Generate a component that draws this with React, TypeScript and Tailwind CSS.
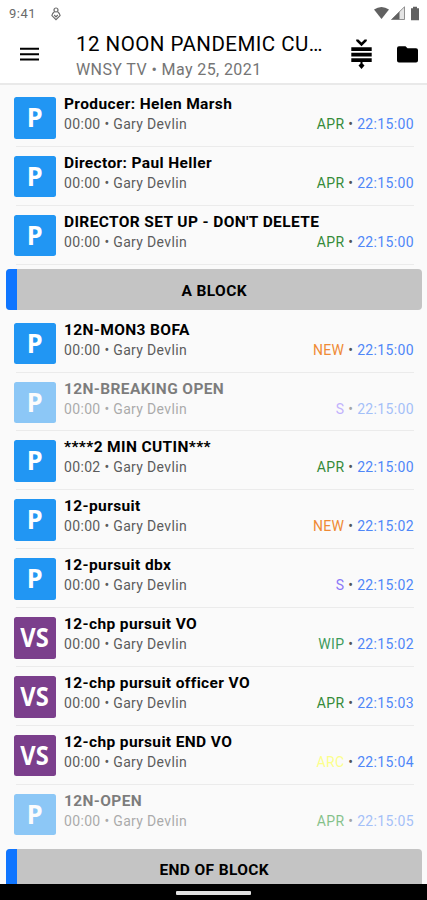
import React from "react";

type Story = {
  kind: "P" | "VS";
  title: string;
  time: string;
  status: string;
  tone: string;
  clock: string;
  dim?: boolean;
};

const GREEN = "text-[#358a39]";
const ORANGE = "text-[#ef8a35]";

const intro: Story[] = [
  { kind: "P", title: "Producer: Helen Marsh", time: "00:00", status: "APR", tone: GREEN, clock: "22:15:00" },
  { kind: "P", title: "Director: Paul Heller", time: "00:00", status: "APR", tone: GREEN, clock: "22:15:00" },
  { kind: "P", title: "DIRECTOR SET UP - DON'T DELETE", time: "00:00", status: "APR", tone: GREEN, clock: "22:15:00" },
];

const blockA: Story[] = [
  { kind: "P", title: "12N-MON3 BOFA", time: "00:00", status: "NEW", tone: ORANGE, clock: "22:15:00" },
  { kind: "P", title: "12N-BREAKING OPEN", time: "00:00", status: "S", tone: "text-[#8b6dff]", clock: "22:15:00", dim: true },
  { kind: "P", title: "****2 MIN CUTIN***", time: "00:02", status: "APR", tone: GREEN, clock: "22:15:00" },
  { kind: "P", title: "12-pursuit", time: "00:00", status: "NEW", tone: ORANGE, clock: "22:15:02" },
  { kind: "P", title: "12-pursuit dbx", time: "00:00", status: "S", tone: "text-[#8b78f8]", clock: "22:15:02" },
  { kind: "VS", title: "12-chp pursuit VO", time: "00:00", status: "WIP", tone: "text-[#3d9a5c]", clock: "22:15:02" },
  { kind: "VS", title: "12-chp pursuit officer VO", time: "00:00", status: "APR", tone: GREEN, clock: "22:15:03" },
  { kind: "VS", title: "12-chp pursuit END VO", time: "00:00", status: "ARC", tone: "text-[#fcff8c]", clock: "22:15:04" },
  { kind: "P", title: "12N-OPEN", time: "00:00", status: "APR", tone: "text-[#0f8a18]", clock: "22:15:05", dim: true },
];

function Row({ s, last = false }: { s: Story; last?: boolean }) {
  return (
    <div className="flex h-[58.9px] shrink-0 pl-3.5 pr-[13px]">
      <div className={`mt-[9px] flex size-[41.5px] shrink-0 items-center justify-center rounded-[2.5px] pb-[2px] font-['Open_Sans',sans-serif] font-bold leading-none text-white ${s.kind === "P" ? "bg-[#2196f3]" : "bg-[#7b3f8c]"} ${s.dim ? "opacity-50" : ""}`}>
        <span className={s.kind === "P" ? "text-[27.5px] scale-x-[0.92]" : "text-[27.5px] scale-x-[0.86]"}>{s.kind}</span>
      </div>
      <div className="relative flex min-w-0 flex-1 flex-col pl-[8.5px] pt-[7px]">
        <div className={s.dim ? "opacity-50" : ""}>
          <div className="whitespace-nowrap text-[15.5px] font-bold leading-[19px] tracking-[0.37px] text-black">{s.title}</div>
          <div className="flex items-center justify-between whitespace-nowrap leading-5">
            <span className="text-[14px] tracking-[0.34px] text-[#5c5c5c]">{s.time} • Gary Devlin</span>
            <span className="text-[14px] tracking-[0.36px] text-[#4f87f8]">
              <span className={s.tone}>{s.status}</span>
              <span className="text-[#555]"> • </span>
              {s.clock}
            </span>
          </div>
        </div>
        {!last && <div className="absolute bottom-0 left-[-40px] right-0 h-px bg-[#ebebeb]" />}
      </div>
    </div>
  );
}

function Block({ label }: { label: string }) {
  return (
    <div className="ml-1.5 mr-[5px] flex h-[41px] shrink-0 overflow-hidden rounded-[4px] bg-[#c4c4c4]">
      <div className="w-[10.5px] bg-[#0f75ff]" />
      <div className="flex flex-1 items-center justify-center pr-[10px] pt-[3px] text-[15.5px] font-bold tracking-[0.37px] text-black">{label}</div>
    </div>
  );
}

export default function App() {
  return (
    <div className="flex h-[900px] w-[427px] flex-col overflow-hidden bg-[#fafafa] font-[Roboto,sans-serif]">
      <header className="flex h-[85px] shrink-0 flex-col border-b-2 border-[#e9e9e9] bg-white">
        <div className="flex h-[27px] items-center pl-[9px] pr-[7px] text-[#6a6a6a]">
          <span className="text-[13px] tracking-[0.5px]">9:41</span>
          <svg className="ml-[15px]" width="10" height="14" viewBox="0 0 10 14" fill="none" stroke="currentColor" strokeWidth="1.2">
            <circle cx="5" cy="3" r="2" />
            <path d="M3.4 4.8Q.9 6.6.9 8.6L5 12.6l4.1-4Q9.1 6.6 6.6 4.8" />
            <path d="M3.2 8 5 9.8 6.8 8" />
          </svg>
          <div className="flex-1" />
          <svg width="46" height="15" viewBox="0 0 46 15" fill="#616161">
            <path d="M0 3.5Q7.5-1.5 15 3.5L7.5 13Z" />
            <path d="M30.5 .8V13.5H17.5Z" fill="#e4e4e4" />
            <path d="M25.5 5.5V13.5H17.5Z" />
            <path d="M30.5 .8v12.7H17.5Z" fill="none" stroke="#777" strokeWidth=".8" />
            <path d="M37 2.3h2V.8h4v1.5h2v12h-8Z" />
          </svg>
        </div>
        <div className="flex flex-1 pl-5 pr-[9px]">
          <svg className="mt-5" width="20" height="15" viewBox="0 0 20 15" fill="#000">
            <path d="M0 .8h19v2H0zM0 6.2h19v2H0zM0 11.6h19v2H0z" />
          </svg>
          <div className="ml-9 w-[262px] whitespace-nowrap pt-1">
            <div className="text-[20.5px] leading-[27px] tracking-[0.47px] text-black">12 NOON PANDEMIC CU…</div>
            <div className="pt-px text-[16px] leading-[22px] tracking-[0.4px] text-[#757575]">WNSY TV • May 25, 2021</div>
          </div>
          <svg className="ml-[13px] mt-3" width="21" height="31" viewBox="0 0 21 31" fill="#000">
            <path d="M5.2 .6H7.4L10.5 3.6 13.6.6h2.2v1.5L10.5 7.2 5.2 2.1z" />
            <path d="M.3 8.2h20.4v3.8H.3zM.3 13.7h20.4v3.8H.3zM.3 19.2h20.4V23H.3z" />
            <path d="M9.5 23h2v1.4l2 2.2-3 3.4-3-3.4 2-2.2z" />
          </svg>
          <svg className="ml-[24.5px] mt-[19px]" width="21" height="17" viewBox="0 0 21 17" fill="#000">
            <path d="M2 .3h6.5l2 2H19a2 2 0 0 1 2 2V14.5a2 2 0 0 1-2 2H2a2 2 0 0 1-2-2V2.3a2 2 0 0 1 2-2Z" />
          </svg>
        </div>
      </header>
      <main className="flex min-h-0 flex-1 flex-col overflow-hidden pt-[3px]">
        {intro.map((s) => <Row key={s.title} s={s} />)}
        <div className="h-[4.5px] shrink-0" />
        <Block label="A BLOCK" />
        <div className="h-[3.5px] shrink-0" />
        {blockA.map((s, i) => <Row key={s.title} s={s} last={i === blockA.length - 1} />)}
        <div className="h-[5px] shrink-0" />
        <Block label="END OF BLOCK" />
      </main>
      <footer className="flex h-4 shrink-0 justify-center bg-black pt-[7px]">
        <div className="h-[4px] w-[75px] rounded-[1px] bg-[#e2e2e2]" />
      </footer>
    </div>
  );
}
